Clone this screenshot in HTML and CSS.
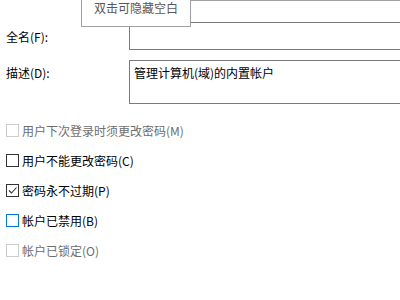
FILE: index.html
```html
<!DOCTYPE html>
<html lang="zh-CN">
<head>
<meta charset="utf-8">
<link rel="stylesheet" href="styles.css">
</head>
<body>
<div class="page">
  <div class="form">
    <div class="row row-prev">
      <span class="label"></span>
      <div class="box box-prev"></div>
    </div>
    <div class="row row-name">
      <span class="label">全名(F):</span>
      <div class="box box-name"></div>
    </div>
    <div class="row row-desc">
      <span class="label">描述(D):</span>
      <div class="box box-desc">管理计算机(域)的内置帐户</div>
    </div>
  </div>
  <div class="checks">
    <div class="check disabled"><span class="cb"></span><span>用户下次登录时须更改密码(M)</span></div>
    <div class="check"><span class="cb"></span><span>用户不能更改密码(C)</span></div>
    <div class="check"><span class="cb"><svg width="11" height="11" viewBox="0 0 11 11"><polyline points="2,5.5 4.5,8 9.5,2.5" fill="none" stroke="#333" stroke-width="1.1"/></svg></span><span>密码永不过期(P)</span></div>
    <div class="check focus"><span class="cb"></span><span>帐户已禁用(B)</span></div>
    <div class="check disabled"><span class="cb"></span><span>帐户已锁定(O)</span></div>
  </div>
  <div class="tooltip">双击可隐藏空白</div>
</div>
</body>
</html>
```
FILE: styles.css
```css
html, body {
  margin: 0;
  padding: 0;
  background: #fff;
  width: 400px;
  height: 300px;
  overflow: hidden;
}
.page {
  position: relative;
  width: 400px;
  height: 300px;
  font-family: "Noto Sans CJK SC", "Noto Sans", sans-serif;
  font-size: 12px;
  color: #000;
}
.form {
  display: flex;
  flex-direction: column;
  gap: 10px;
  padding-left: 6px;
}
.row {
  display: flex;
}
.label {
  width: 123px;
  flex: none;
}
.box {
  width: 290px;
  flex: none;
  border: 1px solid #7a7a7a;
  border-right: none;
  box-sizing: border-box;
}
.row-prev {
  margin-top: -20px;
  margin-bottom: 11px;
}
.box-prev {
  height: 21px;
  border-color: #a0a0a0;
}
.row-name {
  align-items: center;
}
.row-name .label {
  line-height: 12px;
  padding-top: 1px;
}
.box-name {
  height: 28px;
}
.row-desc .label {
  padding-top: 6px;
  line-height: 14px;
}
.box-desc {
  height: 44px;
  padding: 5px 0 0 4px;
  line-height: 14px;
}
.checks {
  display: flex;
  flex-direction: column;
  gap: 17px;
  padding-left: 6px;
  margin-top: 20px;
}
.check {
  display: flex;
  align-items: center;
  gap: 3px;
  height: 13px;
  line-height: 13px;
}
.cb {
  width: 13px;
  height: 13px;
  box-sizing: border-box;
  border: 1px solid #333;
  display: flex;
  align-items: center;
  justify-content: center;
  flex: none;
}
.check.disabled {
  color: #6d6d6d;
}
.check.disabled .cb {
  border-color: #cccccc;
}
.check.focus .cb {
  border-color: #0078d7;
}
.tooltip {
  position: absolute;
  left: 81px;
  top: -4px;
  width: 110px;
  height: 31px;
  box-sizing: border-box;
  border: 1px solid #a0a0a0;
  background: #fff;
  color: #575757;
  text-align: center;
  line-height: 21px;
}
```
